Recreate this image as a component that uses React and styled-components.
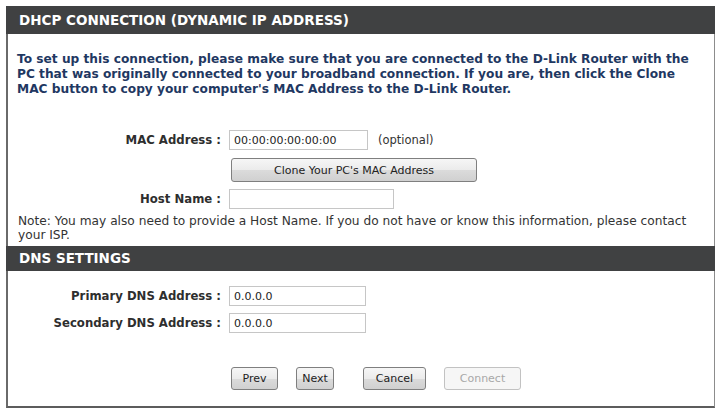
import React from 'react'
import styled, { createGlobalStyle } from 'styled-components'

const GlobalStyle = createGlobalStyle`
  body {
    margin: 0;
    background: #ffffff;
    font-family: "DejaVu Sans", Verdana, sans-serif;
  }
`

const Page = styled.div`
  padding: 6px 5px 0 6px;
`

const Panel = styled.div`
  width: 709px;
  box-sizing: border-box;
  border-left: 2px solid #6a6a6a;
  border-right: 1px solid #8c8c8c;
  border-bottom: 2px solid #5c5c5c;
  padding-bottom: 16px;
`

const SectionHeader = styled.div`
  margin: ${(p) => p.$top || 0}px -1px 0 -2px;
  height: ${(p) => p.$h}px;
  line-height: ${(p) => p.$h}px;
  padding-left: 13px;
  background: #404142;
  color: #ffffff;
  font-size: 13.5px;
  font-weight: bold;
  white-space: nowrap;
`

const Intro = styled.p`
  margin: 0;
  padding: 18px 10px 0 9px;
  color: #1f3862;
  font-size: 12.2px;
  font-weight: bold;
  line-height: 15px;
  white-space: nowrap;
`

const Row = styled.div`
  display: grid;
  grid-template-columns: 213px 1fr;
  column-gap: 8px;
  align-items: center;
  margin-top: ${(p) => p.$top}px;
`

const Label = styled.div`
  text-align: right;
  color: #2e2e2e;
  font-size: 11.7px;
  font-weight: bold;
  white-space: nowrap;
`

const Field = styled.div`
  display: flex;
  align-items: center;
  gap: 10px;
`

const TextInput = styled.input`
  box-sizing: border-box;
  width: ${(p) => p.$w}px;
  height: 20px;
  margin: 0;
  padding: 1px 4px 0;
  border: 1px solid #c6c6c6;
  background: #ffffff;
  color: #222222;
  font-family: "DejaVu Sans", Verdana, sans-serif;
  font-size: 11px;
  outline: none;
`

const Hint = styled.span`
  color: #333333;
  font-size: 11.5px;
`

const Button = styled.button`
  box-sizing: border-box;
  width: ${(p) => p.$w}px;
  height: ${(p) => p.$h || 23}px;
  margin: 0 0 0 ${(p) => p.$ml || 0}px;
  padding: 0;
  border: 1px solid ${(p) => (p.disabled ? '#c2c2c2' : '#7f7f7f')};
  border-radius: 3px;
  background: ${(p) =>
    p.disabled
      ? '#f6f6f6'
      : 'linear-gradient(#f6f6f6 0%, #ebebeb 50%, #dbdbdb 51%, #d0d0d0 100%)'};
  color: ${(p) => (p.disabled ? '#a8a8a8' : '#222222')};
  font-family: "DejaVu Sans", Verdana, sans-serif;
  font-size: 11px;
  cursor: default;
`

const Note = styled.p`
  margin: 5px 0 0;
  padding: 0 8px 0 10px;
  color: #333333;
  font-size: 12.2px;
  line-height: 14px;
  white-space: nowrap;
`

const ButtonBar = styled.div`
  display: flex;
  margin: 34px 0 0 223px;
`

const App = () => {
  return (
    <Page>
      <GlobalStyle />
      <Panel>
        <SectionHeader $h={28}>DHCP CONNECTION (DYNAMIC IP ADDRESS)</SectionHeader>
        <Intro>
          To set up this connection, please make sure that you are connected to the D-Link Router with the
          <br />
          PC that was originally connected to your broadband connection. If you are, then click the Clone
          <br />
          MAC button to copy your computer's MAC Address to the D-Link Router.
        </Intro>

        <Row $top={33}>
          <Label>MAC Address :</Label>
          <Field>
            <TextInput $w={139} defaultValue="00:00:00:00:00:00" />
            <Hint>(optional)</Hint>
          </Field>
        </Row>
        <Row $top={8}>
          <div />
          <div>
            <Button $w={246} $h={24} $ml={2}>Clone Your PC's MAC Address</Button>
          </div>
        </Row>
        <Row $top={7}>
          <Label>Host Name :</Label>
          <Field>
            <TextInput $w={165} defaultValue="" />
          </Field>
        </Row>

        <Note>
          Note: You may also need to provide a Host Name. If you do not have or know this information, please contact
          <br />
          your ISP.
        </Note>

        <SectionHeader $h={25} $top={4}>DNS SETTINGS</SectionHeader>

        <Row $top={15}>
          <Label>Primary DNS Address :</Label>
          <Field>
            <TextInput $w={137} defaultValue="0.0.0.0" />
          </Field>
        </Row>
        <Row $top={7}>
          <Label>Secondary DNS Address :</Label>
          <Field>
            <TextInput $w={137} defaultValue="0.0.0.0" />
          </Field>
        </Row>

        <ButtonBar>
          <Button $w={47}>Prev</Button>
          <Button $w={38} $ml={18}>Next</Button>
          <Button $w={63} $ml={29}>Cancel</Button>
          <Button $w={77} $ml={18} disabled>Connect</Button>
        </ButtonBar>
      </Panel>
    </Page>
  )
}

export default App
